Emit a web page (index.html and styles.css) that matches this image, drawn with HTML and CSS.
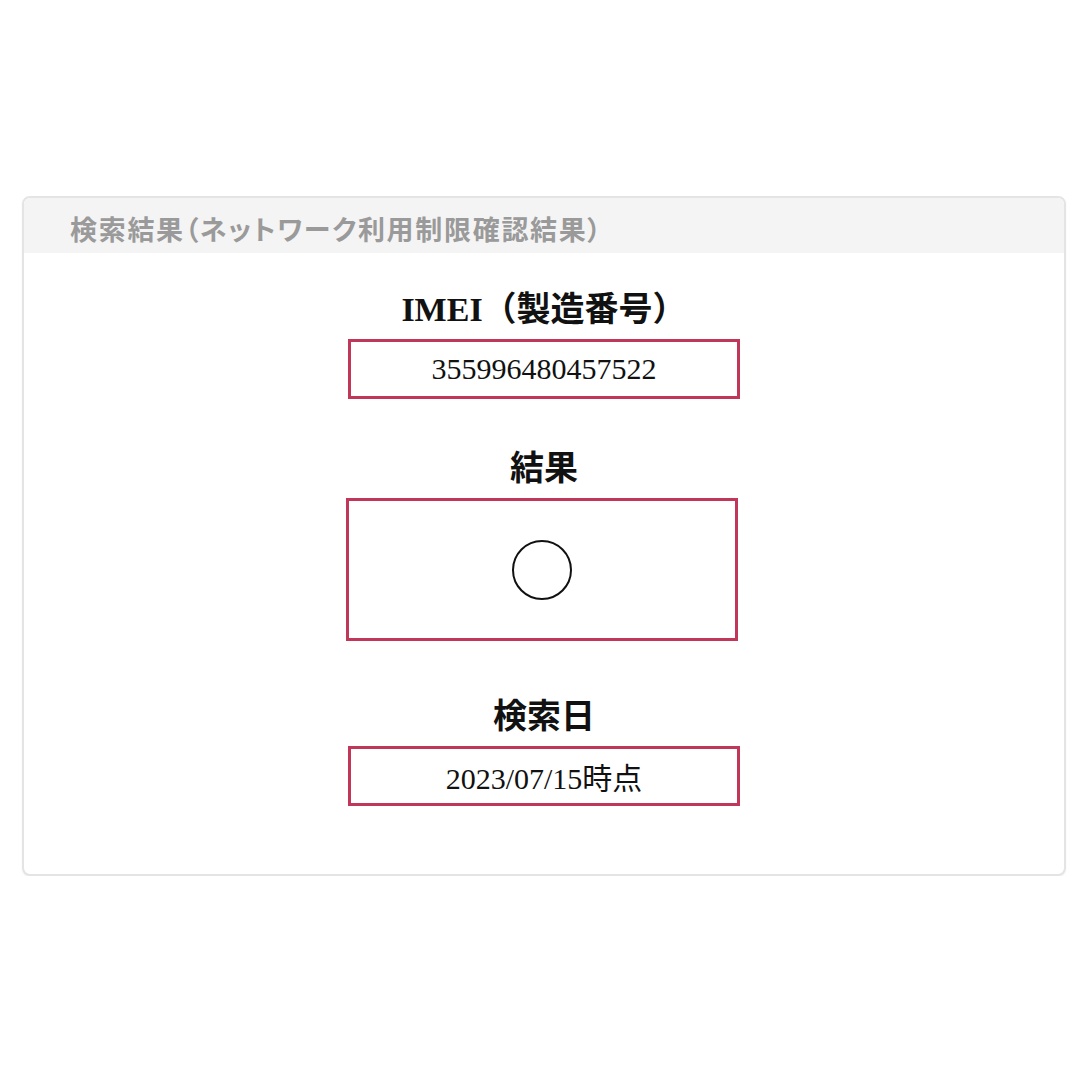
FILE: index.html
```html
<!DOCTYPE html>
<html lang="ja">
<head>
  <meta charset="UTF-8">
  <meta name="viewport" content="width=device-width, initial-scale=1.0">
  <title>検索結果</title>
  <link rel="stylesheet" href="styles.css">
</head>
<body>
  <div class="card">
    <div class="card-header">検索結果（ネットワーク利用制限確認結果）</div>
    <div class="card-body">
      <!-- IMEI -->
      <div class="field">
        <h2 class="field-title">IMEI（製造番号）</h2>
        <div class="field-box">355996480457522</div>
      </div>

      <!-- Result -->
      <div class="field field-result">
        <h2 class="field-title">結果</h2>
        <div class="field-box result-box">
          <svg class="result-mark" width="64" height="64" viewBox="0 0 64 64">
            <circle cx="32" cy="32" r="29" fill="none" stroke="#111" stroke-width="2"/>
          </svg>
        </div>
      </div>

      <!-- Date -->
      <div class="field field-date">
        <h2 class="field-title">検索日</h2>
        <div class="field-box">2023/07/15時点</div>
      </div>
    </div>
  </div>
</body>
</html>
```

FILE: styles.css
```css
/* Global Styles */
body {
  margin: 0;
  padding: 0;
  background-color: #ffffff;
  color: #111111;
  font-family: "Liberation Serif", "Noto Sans CJK JP", serif;
}

/* Card */
.card {
  margin: 196px 0 0 22px;
  width: 1040px;
  border: 2px solid #e4e4e4;
  border-radius: 8px;
  background-color: #fff;
  box-shadow: 0 1px 2px rgba(0, 0, 0, 0.06);
  overflow: hidden;
}
.card-header {
  height: 55px;
  padding-left: 46px;
  background-color: #f4f4f4;
  color: #9a9a9a;
  font-family: "Noto Sans CJK JP", sans-serif;
  font-feature-settings: "palt";
  font-weight: bold;
  font-size: 27px;
  line-height: 62px;
  letter-spacing: 1.7px;
  overflow: hidden;
}
.card-body {
  display: flex;
  flex-direction: column;
  align-items: center;
  padding: 37px 0 68px;
}

/* Fields */
.field {
  display: flex;
  flex-direction: column;
  align-items: center;
}
.field-result {
  margin-top: 50px;
}
.field-date {
  margin-top: 56px;
}
.field-title {
  margin: 0 0 9px;
  font-size: 34px;
  line-height: 40px;
  font-weight: bold;
}
.field-box {
  box-sizing: border-box;
  width: 392px;
  height: 60px;
  border: 3px solid #c0375a;
  display: flex;
  align-items: center;
  justify-content: center;
  font-size: 30px;
}
.result-box {
  height: 143px;
  margin-right: 4px;
}
.result-mark {
  display: block;
}
```
